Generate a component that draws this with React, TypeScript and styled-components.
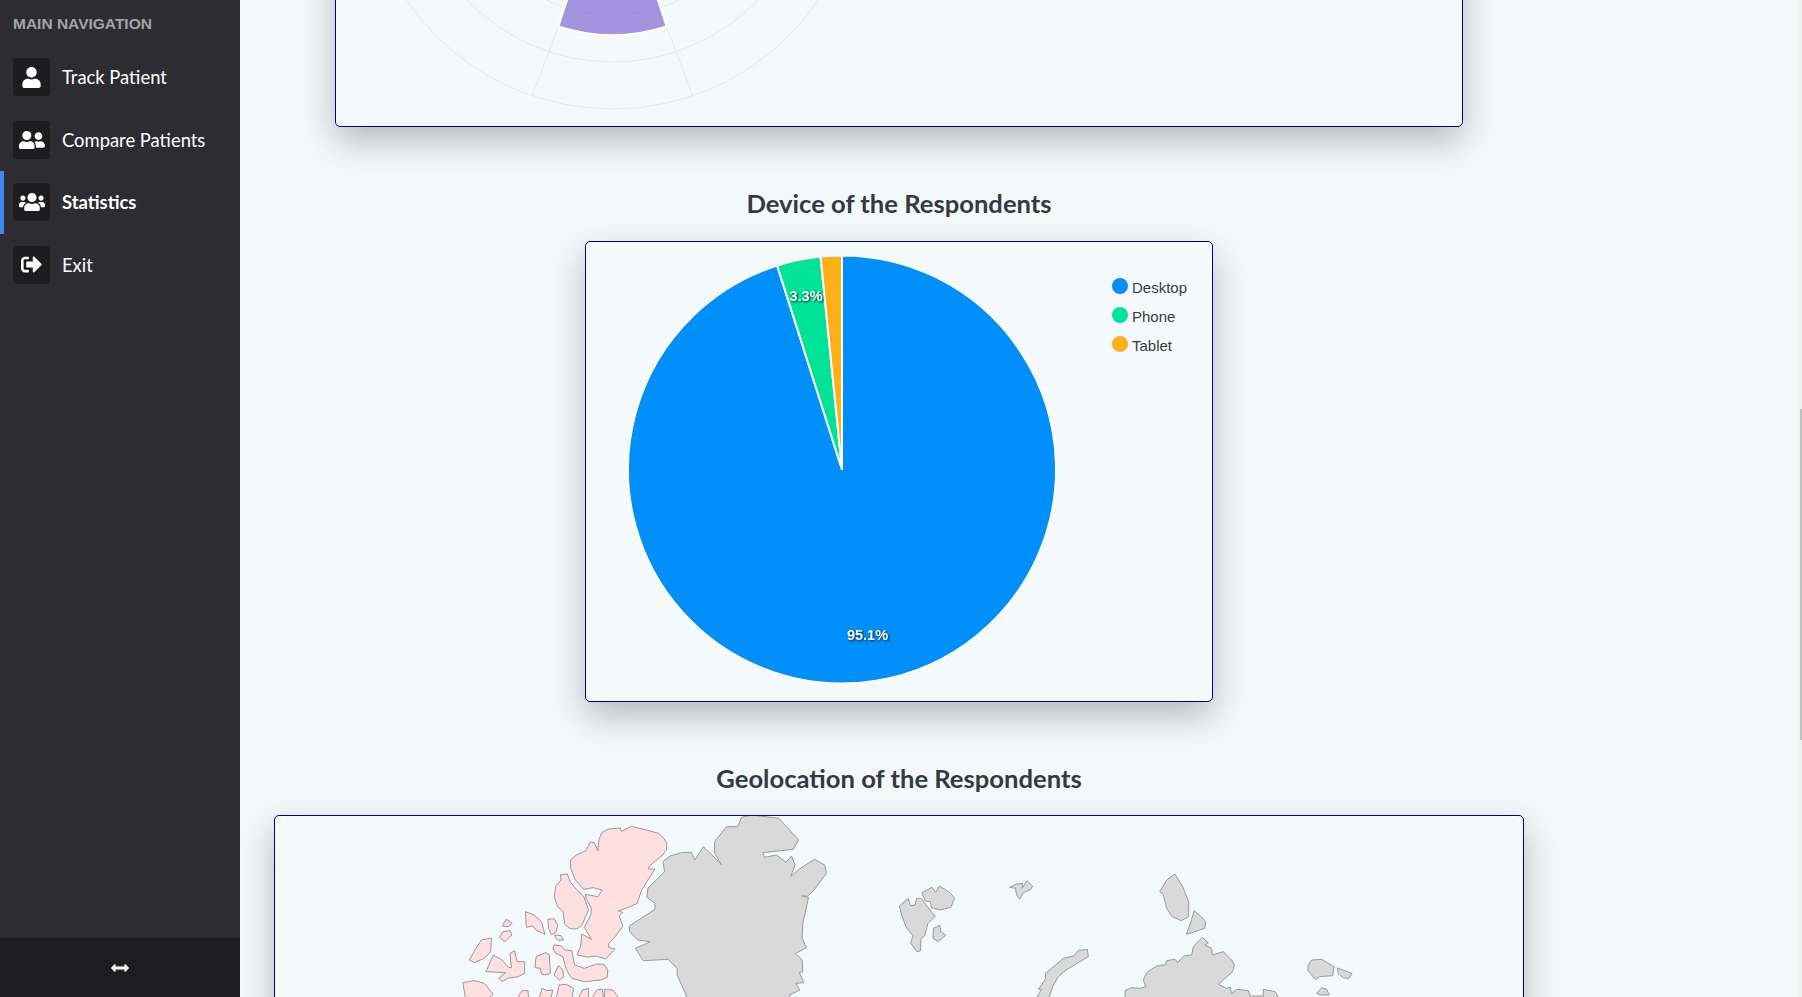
import React from "react";
import styled, { createGlobalStyle } from "styled-components";
import {
  FaArrowsAltH,
  FaSignOutAlt,
  FaUser,
  FaUserFriends,
  FaUsers,
} from "react-icons/fa";

const GlobalStyle = createGlobalStyle`
  html, body {
    margin: 0;
    height: 100%;
    overflow: hidden;
    background: #f3f8fb;
  }
`;

const Page = styled.div`
  display: flex;
  height: 997px;
  overflow: hidden;
  font-family: Lato, "Liberation Sans", sans-serif;
`;

const Sidebar = styled.aside`
  width: 240px;
  flex: none;
  display: flex;
  flex-direction: column;
  background: #2c2c31;
`;

const NavTitle = styled.div`
  padding: 15px 13px 0;
  height: 31px;
  font: bold 15.5px/17px "Liberation Sans", sans-serif;
  color: #a4a4a8;
`;

const NavList = styled.nav`
  flex: 1;
`;

const NavRow = styled.div<{ $active?: boolean }>`
  display: flex;
  align-items: center;
  gap: 12px;
  height: 62.5px;
  padding-left: ${(p) => (p.$active ? 9 : 13)}px;
  border-left: ${(p) => (p.$active ? "4px solid #4285f4" : "none")};
  color: #fff;
  font-size: 18.4px;
  font-weight: ${(p) => (p.$active ? 700 : 400)};
`;

const IconTile = styled.span`
  width: 37px;
  height: 38px;
  display: flex;
  align-items: center;
  justify-content: center;
  border-radius: 4px;
  background: #1d1d20;
`;

const SidebarFooter = styled.div`
  height: 59px;
  display: flex;
  align-items: center;
  justify-content: center;
  background: #1e1e20;
  color: #fff;
  font-size: 18px;
`;

const Main = styled.main`
  flex: 1;
  min-width: 0;
  padding-right: 240px;
  display: flex;
  flex-direction: column;
  align-items: center;
  overflow: hidden;
`;

const Heading = styled.h2`
  margin: 59px 0 21px;
  font-size: 25.6px;
  line-height: 34px;
  font-weight: 700;
  color: #343a40;
`;

const Card = styled.section<{ $width: number; $height: number; $shift?: number }>`
  flex: none;
  box-sizing: border-box;
  width: ${(p) => p.$width}px;
  height: ${(p) => p.$height}px;
  margin-top: ${(p) => p.$shift ?? 0}px;
  display: flex;
  border: 1px solid #00008b;
  border-radius: 5px;
  background: #f4f9fc;
  box-shadow: 0 14px 34px rgba(0, 0, 0, 0.25);
`;

const Legend = styled.div`
  display: flex;
  flex-direction: column;
  gap: 9px;
  padding-top: 34px;
  margin-left: 56px;
`;

const LegendRow = styled.div`
  display: flex;
  align-items: center;
  gap: 4px;
  height: 20px;
  font: 15px "Liberation Sans", sans-serif;
  color: #373d3f;
`;

const LegendDot = styled.span<{ $color: string }>`
  width: 16px;
  height: 16px;
  border-radius: 50%;
  background: ${(p) => p.$color};
`;

const LegendText = styled.span`
  padding-top: 3px;
`;

const SliceLabel = styled.text`
  font: bold 14.5px "Liberation Sans", sans-serif;
  fill: #fff;
  text-anchor: middle;
  filter: drop-shadow(1px 1px 1px rgba(0, 0, 0, 0.75));
`;

const ScrollTrack = styled.div`
  width: 4px;
  flex: none;
  background: #f1f1f1;
`;

const ScrollThumb = styled.div`
  width: 2px;
  height: 331px;
  margin: 409px 0 0 2px;
  background: #c1c1c1;
`;

const navItems = [
  { label: "Track Patient", icon: <FaUser size={21} /> },
  { label: "Compare Patients", icon: <FaUserFriends size={26} /> },
  { label: "Statistics", icon: <FaUsers size={26} />, active: true },
  { label: "Exit", icon: <FaSignOutAlt size={21} /> },
];

const devices = [
  { name: "Desktop", color: "#008ffb", share: 95.1, label: "95.1%", x: 281.5, y: 398 },
  { name: "Phone", color: "#00e396", share: 3.3, label: "3.3%", x: 220, y: 59 },
  { name: "Tablet", color: "#feb019", share: 1.6 },
];

const polar = (cx: number, cy: number, r: number, deg: number) => {
  const a = (deg * Math.PI) / 180;
  return [cx + r * Math.sin(a), cy - r * Math.cos(a)];
};

const PieChart = () => {
  const cx = 256;
  const cy = 227.5;
  const r = 214;
  let start = 0;
  return (
    <svg width={470} height={459}>
      {devices.map((d) => {
        const end = start + (d.share / 100) * 360;
        const [x1, y1] = polar(cx, cy, r, start);
        const [x2, y2] = polar(cx, cy, r, end);
        const large = end - start > 180 ? 1 : 0;
        start = end;
        return (
          <path
            key={d.name}
            d={`M${cx} ${cy}L${x1} ${y1}A${r} ${r} 0 ${large} 1 ${x2} ${y2}Z`}
            fill={d.color}
            stroke="#fff"
            strokeWidth={2}
          />
        );
      })}
      {devices.map(
        (d) =>
          d.label && (
            <SliceLabel key={d.name} x={d.x} y={d.y}>
              {d.label}
            </SliceLabel>
          )
      )}
    </svg>
  );
};

// only the lower end of the rose chart is on screen
const RoseChart = () => {
  const cx = 276.5;
  const cy = 260;
  const rings = [108, 155, 202, 249];
  const [ax, ay] = polar(cx, cy, 175, 162);
  const [bx, by] = polar(cx, cy, 175, 198);
  return (
    <svg width={1126} height={526}>
      {rings.map((ring) => (
        <circle key={ring} cx={cx} cy={cy} r={ring} fill="none" stroke="#e8e8e8" />
      ))}
      {[
        [ax, ay, 161.2],
        [bx, by, 198.8],
      ].map(([x1, y1, deg]) => {
        const [x2, y2] = polar(cx, cy, 249, deg);
        return <line key={deg} x1={x1} y1={y1} x2={x2} y2={y2} stroke="#e8e8e8" />;
      })}
      <path
        d={`M${cx} ${cy}L${ax} ${ay}A175 175 0 0 1 ${bx} ${by}Z`}
        fill="#775dd0"
        fillOpacity={0.65}
        stroke="#fff"
        strokeWidth={2}
      />
    </svg>
  );
};

// outlines traced from the picture: origin and scale of the crop they were read in
const trace = (ox: number, oy: number, sx: number, sy: number, pts: string) =>
  pts
    .trim()
    .split(/\s+/)
    .map((pair) => {
      const [x, y] = pair.split(",").map(Number);
      return `${ox + x / sx},${oy + y / sy}`;
    })
    .join(" ");

const pinkLand = [
  "921,118 930,97 948,87 981,84 984,94 1012,79 1050,89 1088,100 1103,115 1111,130 1110,150 1098,167 1080,182 1061,200 1060,207 1078,207 1058,240 1040,272 1028,310 1003,322 975,333 988,337 978,348 988,378 965,412 948,432 948,442 966,447 940,477 912,468 890,471 860,465 870,438 873,402 900,418 880,382 898,345 900,325 885,295 883,283 918,290 930,270 905,263 878,268 855,240 842,205 841,180 858,165 885,152 896,126 908,128 918,152",
  "813,224 833,222 840,245 858,268 878,288 892,330 872,378 858,387 840,386 825,372 820,333 805,320 796,290 800,258 815,240",
  "715,335 740,345 760,365 770,403 745,390 735,378 718,382",
  "778,358 795,356 806,375 800,398 788,404 780,385",
  "797,405 815,407 822,420 808,421 800,415",
  "662,357 678,370 668,380 650,378",
  "652,395 673,392 677,405 658,425 643,412",
  "592,420 620,414 618,455 600,475 572,488 558,480 575,448",
  "625,465 650,480 668,503 676,502 672,460 685,452 692,485 713,485 713,520 695,530 665,535 650,545 640,535 660,518 605,515",
  "745,470 772,458 782,465 785,520 772,525 760,522 757,505 742,503",
  "792,445 795,435 815,437 825,450 845,452 853,495 880,505 915,492 935,493 946,510 944,532 927,540 880,545 845,535 830,510 820,470 800,460",
  "808,497 820,510 822,530 810,540 795,525",
  "540,548 572,542 600,550 625,582 605,600 548,600",
  "690,600 705,572 722,572 725,600",
  "752,600 762,565 775,572 792,570 785,600",
  "800,600 810,555 830,553 850,565 845,600",
  "860,600 875,570 892,565 892,600",
  "898,600 915,570 930,567 935,600",
  "937,600 937,568 960,570 980,600",
].map((p) => trace(270, 800, 2.8, 3, p));

const greyLand = [
  trace(270, 800, 2.8, 3, "1310,80 1320,52 1350,45 1425,55 1480,120 1465,148 1380,158 1385,172 1418,165 1445,187 1460,168 1470,195 1458,230 1480,208 1525,178 1553,195 1558,220 1520,275 1505,288 1488,288 1508,292 1492,370 1490,415 1502,443 1472,460 1490,480 1492,515 1482,518 1495,548 1472,550 1484,570 1455,585 1460,620 1170,620 1165,585 1140,525 1140,505 1115,478 1045,482 1023,445 1065,425 1030,420 1007,395 1006,378 1078,328 1078,310 1055,292 1058,265 1105,215 1100,185 1120,168 1155,157 1180,157 1190,180 1213,140 1240,168 1265,195 1245,160 1245,125 1278,80"),
  trace(820, 800, 2.178, 3, "173,318 192,295 197,317 207,315 210,295 220,295 251,350 235,370 228,408 220,415 219,452 211,455 197,428 203,408 187,380 178,345"),
  trace(820, 800, 2.178, 3, "222,278 244,262 252,277 260,258 280,275 293,293 285,322 262,330 243,323 240,305 229,303"),
  trace(820, 800, 2.178, 3, "247,385 261,376 263,395 274,405 258,425 246,415"),
  trace(820, 800, 2.178, 3, "413,262 428,252 441,250 440,265 451,242 463,258 459,268 443,278 435,297 428,285 426,265"),
  trace(820, 800, 2.178, 3, "740,275 755,240 773,222 790,260 803,305 803,350 787,362 767,350 755,325 748,285"),
  trace(820, 800, 2.178, 3, "815,332 830,350 840,365 838,385 798,403 808,365"),
  trace(1000, 930, 3, 3, "262,58 265,80 240,95 198,120 175,140 158,170 145,210 105,210 125,178 115,178 135,150 137,130 155,115 190,85 220,78 235,62"),
  trace(1000, 930, 3, 3, "375,182 395,173 420,175 437,170 430,150 440,128 470,108 497,104 500,92 525,88 533,97 553,77 575,75 580,50 607,22 625,38 615,45 635,55 637,75 670,65 695,90 703,105 698,125 670,150 655,163 680,175 690,172 695,190 710,178 745,182 750,198 790,198 790,178 825,185 840,210 375,210"),
  trace(1000, 930, 3, 3, "925,105 935,90 965,88 1002,110 998,137 960,140 945,148 923,120"),
  trace(1000, 930, 3, 3, "1012,114 1056,130 1046,146 1030,143 1015,132"),
  trace(1000, 930, 3, 3, "950,190 965,173 980,178 988,195 960,195"),
];

const WorldMap = () => (
  <svg width={1248} height={398} viewBox="275 816 1248 398">
    {pinkLand.map((pts) => (
      <polygon key={pts} points={pts} fill="#ffdfdf" stroke="#999" />
    ))}
    {greyLand.map((pts) => (
      <polygon key={pts} points={pts} fill="#d9d9d9" stroke="#999" />
    ))}
  </svg>
);

export default function App() {
  return (
    <Page>
      <GlobalStyle />
      <Sidebar>
        <NavTitle>MAIN NAVIGATION</NavTitle>
        <NavList>
          {navItems.map((item) => (
            <NavRow key={item.label} $active={item.active}>
              <IconTile>{item.icon}</IconTile>
              {item.label}
            </NavRow>
          ))}
        </NavList>
        <SidebarFooter>
          <FaArrowsAltH />
        </SidebarFooter>
      </Sidebar>
      <Main>
        <Card $width={1128} $height={528} $shift={-401}>
          <RoseChart />
        </Card>
        <Heading>Device of the Respondents</Heading>
        <Card $width={628} $height={461}>
          <PieChart />
          <Legend>
            {devices.map((d) => (
              <LegendRow key={d.name}>
                <LegendDot $color={d.color} />
                <LegendText>{d.name}</LegendText>
              </LegendRow>
            ))}
          </Legend>
        </Card>
        <Heading>Geolocation of the Respondents</Heading>
        <Card $width={1250} $height={400} $shift={-1}>
          <WorldMap />
        </Card>
      </Main>
      <ScrollTrack>
        <ScrollThumb />
      </ScrollTrack>
    </Page>
  );
}
